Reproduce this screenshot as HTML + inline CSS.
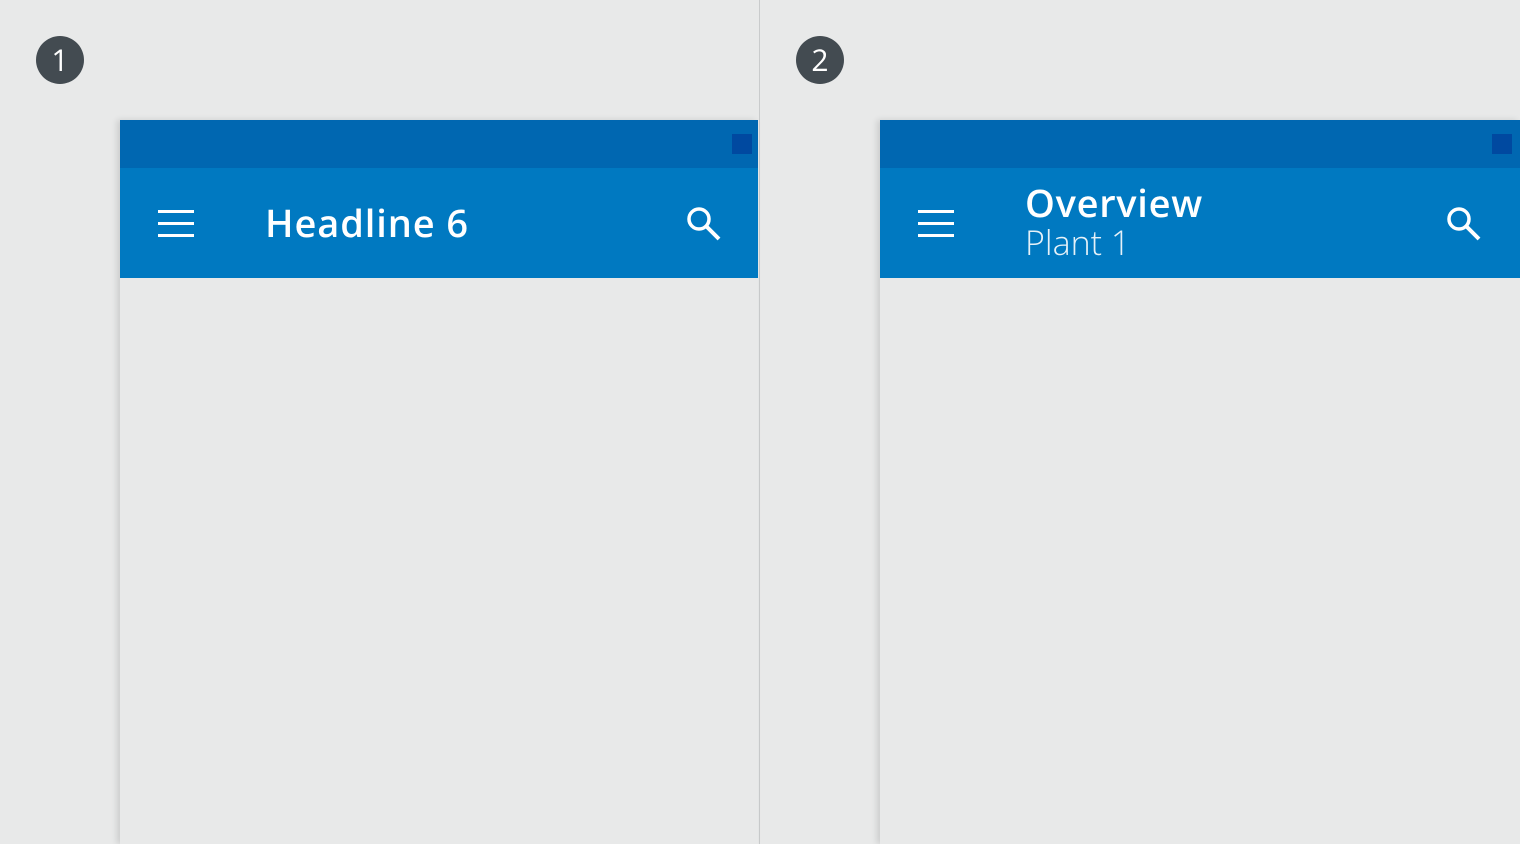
<!DOCTYPE html>
<html><head><style>
body{margin:0;width:1520px;height:844px;background:#e8e9e9;position:relative;overflow:hidden;font-family:"Open Sans","Liberation Sans",sans-serif}
.badge{position:absolute;top:36px;width:48px;height:48px;border-radius:50%;background:#434b51;color:#fff;font-size:30px;line-height:48px;text-align:center;font-weight:500}
.divider{position:absolute;left:759px;top:0;width:1px;height:844px;background:#c9cbcc}
.panel{position:absolute;top:120px;height:724px;background:#e8e9e9;box-shadow:-3px 0 6px rgba(0,0,0,0.12)}
.status{position:absolute;left:0;top:0;right:0;height:48px;background:#0067b1}
.sq{position:absolute;top:14px;width:20px;height:20px;background:#0049a0}
.bar{position:absolute;left:0;top:48px;right:0;height:110px;background:#0079c1}
.ham{position:absolute;left:38px;top:42px;width:36px}
.ham div{height:3px;background:#fff;margin-bottom:9px}
.title{position:absolute;color:#fff}
</style></head><body>
<div class="badge" style="left:36px">1</div>
<div class="badge" style="left:796px">2</div>
<div class="divider"></div>

<div class="panel" style="left:120px;width:638px">
<div class="status"><div class="sq" style="left:612px"></div></div>
<div class="bar">
<div class="ham"><div></div><div></div><div></div></div>
<div class="title" style="left:145px;top:30px;font-size:38px;line-height:50px;font-weight:600;letter-spacing:0.9px">Headline 6</div>
<svg style="position:absolute;left:564px;top:36px" width="40" height="40" viewBox="0 0 40 40"><circle cx="15" cy="15" r="10" fill="none" stroke="#fff" stroke-width="3.5"/><path d="M22 22 L35 35" stroke="#fff" stroke-width="4"/></svg>
</div>
</div>

<div class="panel" style="left:880px;width:640px">
<div class="status"><div class="sq" style="left:612px"></div></div>
<div class="bar">
<div class="ham"><div></div><div></div><div></div></div>
<div class="title" style="left:145px;top:10px;font-size:38px;line-height:50px;font-weight:600;letter-spacing:0.7px">Overview</div>
<div class="title" style="left:145px;top:54px;font-size:34px;line-height:40px;font-weight:300;opacity:0.9">Plant 1</div>
<svg style="position:absolute;left:564px;top:36px" width="40" height="40" viewBox="0 0 40 40"><circle cx="15" cy="15" r="10" fill="none" stroke="#fff" stroke-width="3.5"/><path d="M22 22 L35 35" stroke="#fff" stroke-width="4"/></svg>
</div>
</div>
</body></html>
